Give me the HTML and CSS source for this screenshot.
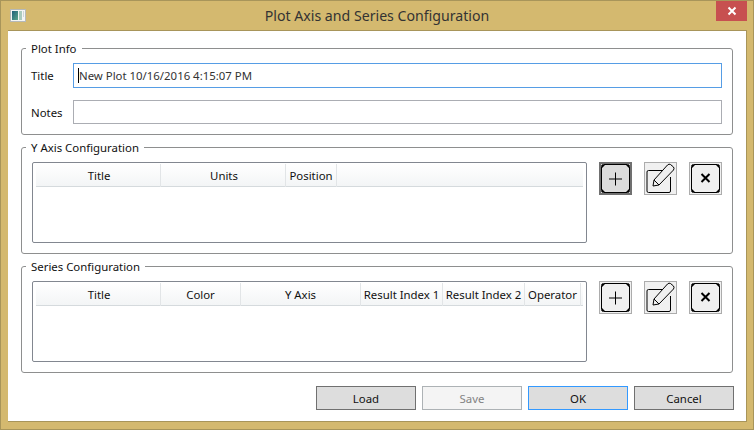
FILE: index.html
```html
<!DOCTYPE html>
<html lang="en">

<head>
    <meta charset="UTF-8">
    <meta name="viewport" content="width=device-width, initial-scale=1.0">
    <title>Plot Axis and Series Configuration</title>
    <link rel="stylesheet" href="styles.css">
</head>

<body>
    <div class="window">
        <header class="titlebar">
            <svg class="app-icon" width="16" height="13" viewBox="0 0 16 13">
                <defs>
                    <linearGradient id="icon-teal" x1="0" y1="0" x2="1" y2="1">
                        <stop offset="0" stop-color="#1f5f7a"/>
                        <stop offset="1" stop-color="#5aa58a"/>
                    </linearGradient>
                </defs>
                <rect x="0.5" y="0.5" width="15" height="12" fill="#f4f5f4" stroke="#b5b9b8"/>
                <rect x="2" y="2" width="6" height="9" fill="url(#icon-teal)"/>
                <rect x="9" y="2" width="3" height="9" fill="#a9cbbd"/>
                <rect x="13" y="2" width="1" height="6" fill="#ccd8d6"/>
            </svg>
            <h1 class="window-title">Plot Axis and Series Configuration</h1>
            <button class="close-btn" aria-label="Close">
                <svg width="10" height="10" viewBox="0 0 10 10">
                    <path d="M1.5 1.5 L8.5 8.5 M8.5 1.5 L1.5 8.5" stroke="#fff" stroke-width="2"/>
                </svg>
            </button>
        </header>

        <main class="content">
            <fieldset class="group">
                <legend>Plot Info</legend>
                <div class="info-form">
                    <label class="info-label">Title</label>
                    <div class="textbox focused"><span class="caret"></span>New Plot 10/16/2016 4:15:07 PM</div>
                    <label class="info-label">Notes</label>
                    <div class="textbox notes"></div>
                </div>
            </fieldset>

            <fieldset class="group">
                <legend>Y Axis Configuration</legend>
                <div class="group-row">
                    <div class="table">
                        <div class="table-head axis-cols">
                            <div class="col nudge">Title</div>
                            <div class="col nudge">Units</div>
                            <div class="col">Position</div>
                            <div class="col last"></div>
                        </div>
                    </div>
                    <div class="tools">
                        <button class="tool hover" aria-label="Add">
                            <svg class="tool-icon" viewBox="0 0 31 31">
                                <use href="#tool-frame"/>
                                <use href="#plus-mark"/>
                            </svg>
                        </button>
                        <button class="tool" aria-label="Edit">
                            <svg class="tool-icon" viewBox="0 0 31 31">
                                <use href="#edit-icon"/>
                            </svg>
                        </button>
                        <button class="tool" aria-label="Delete">
                            <svg class="tool-icon" viewBox="0 0 31 31">
                                <use href="#tool-frame"/>
                                <use href="#cross-mark"/>
                            </svg>
                        </button>
                    </div>
                </div>
            </fieldset>

            <fieldset class="group">
                <legend>Series Configuration</legend>
                <div class="group-row">
                    <div class="table">
                        <div class="table-head series-cols">
                            <div class="col nudge">Title</div>
                            <div class="col">Color</div>
                            <div class="col">Y Axis</div>
                            <div class="col">Result Index 1</div>
                            <div class="col">Result Index 2</div>
                            <div class="col">Operator</div>
                            <div class="col last"></div>
                        </div>
                    </div>
                    <div class="tools">
                        <button class="tool" aria-label="Add">
                            <svg class="tool-icon" viewBox="0 0 31 31">
                                <use href="#tool-frame"/>
                                <use href="#plus-mark"/>
                            </svg>
                        </button>
                        <button class="tool" aria-label="Edit">
                            <svg class="tool-icon" viewBox="0 0 31 31">
                                <use href="#edit-icon"/>
                            </svg>
                        </button>
                        <button class="tool" aria-label="Delete">
                            <svg class="tool-icon" viewBox="0 0 31 31">
                                <use href="#tool-frame"/>
                                <use href="#cross-mark"/>
                            </svg>
                        </button>
                    </div>
                </div>
            </fieldset>

            <div class="actions">
                <button class="action">Load</button>
                <button class="action" disabled>Save</button>
                <button class="action default">OK</button>
                <button class="action">Cancel</button>
            </div>
        </main>
    </div>

    <svg class="defs" width="0" height="0">
        <defs>
            <g id="tool-frame">
                <rect x="1.5" y="1.5" width="28" height="28" rx="2" fill="none" stroke="#000"/>
                <path d="M2 2 H5 L2 5 Z M29 2 V5 L26 2 Z M2 29 V26 L5 29 Z M29 29 H26 L29 26 Z" fill="#000"/>
            </g>
            <path id="plus-mark" d="M15.5 9.5 V22.5 M9 16 H22" stroke="#000" fill="none"/>
            <path id="cross-mark" d="M11.5 11 L19.5 19 M19.5 11 L11.5 19" stroke="#000" stroke-width="2" fill="none"/>
            <g id="edit-icon" fill="none" stroke="#000">
                <path d="M25.5 14 V28 Q25.5 29.5 24 29.5 H3.5 Q2 29.5 2 28 V9 Q2 7.5 3.5 7.5 H17.5"/>
                <path d="M8 23 L9 17 L22.5 2 Q24 0.5 25.5 1.5 L28.5 4 Q29.5 5.5 28.5 7 L14 22 Z"/>
                <path d="M9 17 L14 22"/>
            </g>
        </defs>
    </svg>
</body>

</html>
```

FILE: styles.css
```css
* {
    box-sizing: border-box;
}

body {
    margin: 0;
    font-family: 'Noto Sans', sans-serif;
    font-size: 11.4px;
    color: #111;
}

.window {
    width: 754px;
    height: 430px;
    display: flex;
    flex-direction: column;
    background-color: #d4b96f;
    border: 1px solid #a8955a;
}

.titlebar {
    height: 29px;
    flex-shrink: 0;
    display: grid;
    grid-template-columns: 1fr auto 1fr;
    align-items: start;
}

.app-icon {
    margin: 8px 0 0 9px;
}

.window-title {
    margin: 5px 0 0;
    font-size: 14.15px;
    font-weight: normal;
    line-height: 20px;
    color: #333;
}

.close-btn {
    justify-self: end;
    width: 31px;
    height: 20px;
    margin-right: 6px;
    padding: 0;
    border: none;
    background-color: #c75050;
    display: flex;
    align-items: center;
    justify-content: center;
}

.content {
    flex: 1;
    margin: 0 6px 7px 7px;
    padding: 9px 13px 0;
    background-color: #fff;
    border: 1px solid #a8955a;
    border-width: 1px 1px 1px 0;
}

.group {
    margin: 0 0 4px;
    padding: 7px 10px 10px;
    border: 1px solid #8e8f8f;
    border-radius: 3px;
    min-width: 0;
}

.group legend {
    margin-left: -6px;
    padding: 0 5px;
    line-height: 18px;
    height: 16px;
}

.info-form {
    display: grid;
    grid-template-columns: 41px 1fr;
    row-gap: 12px;
    align-items: center;
}

.info-label {
    margin-left: -1px;
}

.textbox {
    height: 25px;
    padding-left: 4px;
    border: 1px solid #abadb3;
    display: flex;
    align-items: center;
    color: #333;
}

.textbox.focused {
    border-color: #569de5;
}

.textbox.notes {
    height: 24px;
}

.caret {
    width: 1px;
    height: 15px;
    background-color: #000;
}

.group-row {
    display: flex;
    align-items: flex-start;
}

.table {
    width: 555px;
    height: 81px;
    padding: 1px 3px;
    border: 1px solid #828790;
    border-radius: 2px;
}

.table-head {
    height: 23px;
    display: grid;
    background: linear-gradient(#fff, #f3f5f6);
    border-bottom: 1px solid #d5dadd;
}

.axis-cols {
    grid-template-columns: 125px 125px 51px 1fr;
}

.series-cols {
    grid-template-columns: 125px 80px 120px 82px 82px 56px 1fr;
}

.col {
    text-align: center;
    line-height: 23px;
    white-space: nowrap;
    border-right: 1px solid #e2e5e7;
}

.col.nudge {
    padding-left: 2px;
}

.col.last {
    border-right: none;
}

.tools {
    margin-left: 12px;
    display: flex;
    gap: 12px;
}

.tool {
    width: 33px;
    height: 33px;
    padding: 0;
    border: 1px solid #acacac;
    background-color: #f0f0f0;
    display: flex;
    align-items: center;
    justify-content: center;
    overflow: hidden;
}

.tool-icon {
    width: 31px;
    height: 31px;
    flex-shrink: 0;
}

.tool.hover {
    background-color: #dcdcdc;
    border: 2px solid #707070;
}

.actions {
    margin: 13px -1px 0 0;
    display: flex;
    justify-content: flex-end;
    gap: 6px;
}

.action {
    width: 100px;
    height: 24px;
    padding: 0;
    font-family: inherit;
    font-size: 11.4px;
    color: #111;
    background-color: #dddddd;
    border: 1px solid #707070;
}

.action:disabled {
    color: #838383;
    background-color: #f4f4f4;
    border-color: #adb2b5;
}

.action.default {
    border-color: #3399ff;
}

.defs {
    position: absolute;
}
```
